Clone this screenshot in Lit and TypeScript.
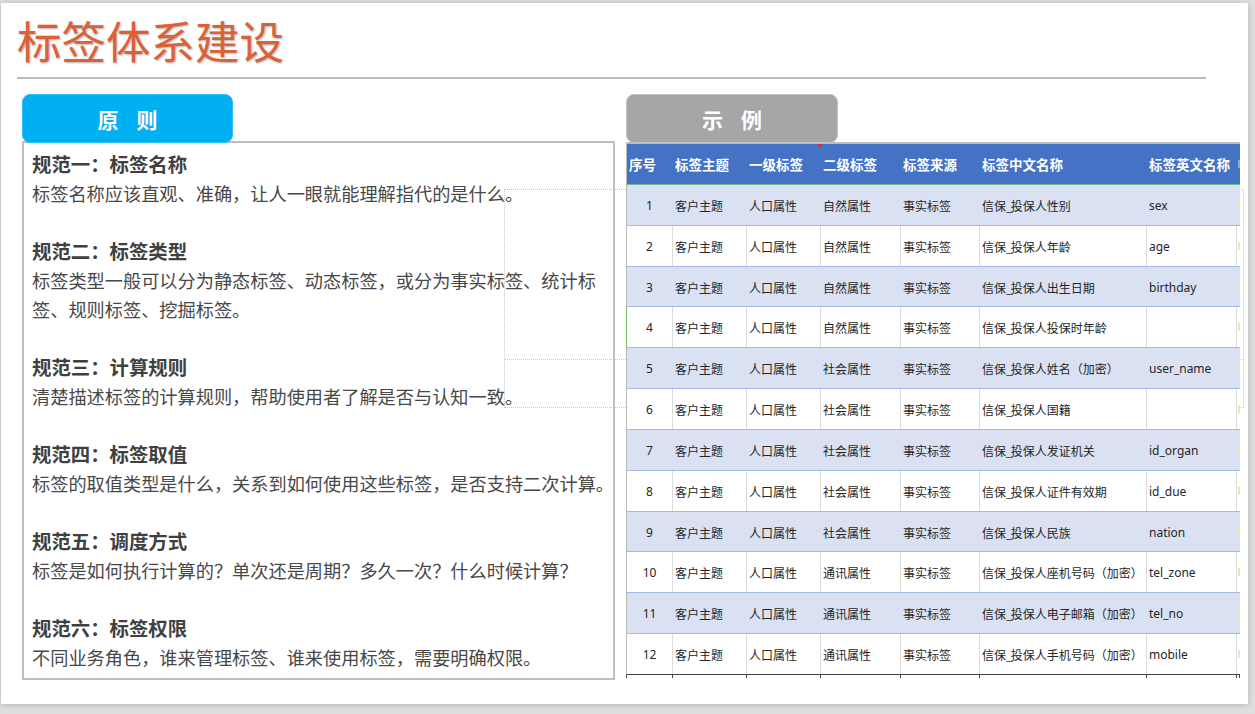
import { LitElement, css, html } from "lit";
import { customElement } from "lit/decorators.js";

const rules = [
  ["规范一：标签名称", "标签名称应该直观、准确，让人一眼就能理解指代的是什么。"],
  ["规范二：标签类型", "标签类型一般可以分为静态标签、动态标签，或分为事实标签、统计标签、规则标签、挖掘标签。"],
  ["规范三：计算规则", "清楚描述标签的计算规则，帮助使用者了解是否与认知一致。"],
  ["规范四：标签取值", "标签的取值类型是什么，关系到如何使用这些标签，是否支持二次计算。"],
  ["规范五：调度方式", "标签是如何执行计算的？单次还是周期？多久一次？什么时候计算？"],
  ["规范六：标签权限", "不同业务角色，谁来管理标签、谁来使用标签，需要明确权限。"],
];

const columns = ["序号", "标签主题", "一级标签", "二级标签", "标签来源", "标签中文名称", "标签英文名称"];

const rows = [
  ["自然属性", "性别", "sex"],
  ["自然属性", "年龄", "age"],
  ["自然属性", "出生日期", "birthday"],
  ["自然属性", "投保时年龄", ""],
  ["社会属性", "姓名（加密）", "user_name"],
  ["社会属性", "国籍", ""],
  ["社会属性", "发证机关", "id_organ"],
  ["社会属性", "证件有效期", "id_due"],
  ["社会属性", "民族", "nation"],
  ["通讯属性", "座机号码（加密）", "tel_zone"],
  ["通讯属性", "电子邮箱（加密）", "tel_no"],
  ["通讯属性", "手机号码（加密）", "mobile"],
];

@customElement("app-root")
export class AppRoot extends LitElement {
  static styles = css`
    :host {
      display: block;
      height: 714px;
      overflow: hidden;
      background: #dedede;
      font-family: "Noto Sans CJK SC", "Noto Sans", sans-serif;
    }
    .slide {
      position: relative;
      box-sizing: border-box;
      width: 1247px;
      height: 701px;
      margin: 3px 0 0 1px;
      padding: 0 0 0 16px;
      background: #fff;
      box-shadow: 0 1px 6px rgba(0, 0, 0, 0.18);
    }
    h1 {
      margin: 0;
      height: 74px;
      font-size: 44.5px;
      line-height: 74px;
      font-weight: 400;
      color: #dd6136;
      text-shadow: 1px 1px 2px rgba(0, 0, 0, 0.3);
    }
    .rule {
      width: 1189px;
      height: 2px;
      background: #bcbcbc;
    }
    .columns {
      display: flex;
      gap: 11px;
      margin: 15px 0 0 5px;
    }
    .left {
      width: 593px;
    }
    .right {
      position: relative;
      width: 614px;
    }
    .pill {
      position: relative;
      z-index: 2;
      box-sizing: border-box;
      display: flex;
      align-items: center;
      justify-content: center;
      width: 211px;
      height: 49px;
      border-radius: 8px;
      font-size: 21px;
      font-weight: 700;
      color: #fff;
      word-spacing: 13px;
    }
    .pill.blue {
      background: #00b0f0;
      border: 1px solid #2fc0f5;
    }
    .pill.grey {
      width: 212px;
      background: #a6a6a6;
      border: 1px solid #c4c4c4;
    }
    .box {
      box-sizing: border-box;
      height: 539px;
      margin-top: -2px;
      padding: 7px 0 0 8px;
      border: 2px solid #bfbfbf;
      font-size: 18.2px;
      line-height: 29px;
      color: #484848;
    }
    .item {
      margin-right: -6px;
      margin-bottom: 29px;
    }
    .item b {
      display: block;
      margin: -1px 0 1px;
      font-size: 19.4px;
      font-weight: 700;
      color: #404040;
    }
    .sheet {
      position: relative;
      z-index: 1;
      margin-top: -1px;
      background: #fff;
      border-top: 2px solid #bdbdbd;
    }
    .row {
      display: grid;
      grid-template-columns: 46px 74px 74px 80px 79px 167px 90px 3px;
      box-sizing: border-box;
      height: 40.83px;
      border-left: 1px solid #bbb;
      border-bottom: 1px solid #a3bae6;
      font-size: 12px;
      color: #262626;
    }
    .row > div {
      display: flex;
      align-items: center;
      box-sizing: border-box;
      padding: 1px 0 0 2px;
      white-space: nowrap;
      overflow: hidden;
      border-right: 1px solid #dcdcdc;
    }
    .row > .num {
      justify-content: center;
      padding-left: 0;
      font-family: "Noto Sans", sans-serif;
    }
    .row > .en {
      font-family: "Noto Sans", sans-serif;
    }
    .row > .stub {
      padding: 0;
      border-right: 0;
    }
    .stub i {
      display: block;
      width: 2px;
      height: 8px;
      margin-left: 1px;
      background: #eee2bf;
    }
    .us {
      letter-spacing: -2px;
    }
    .row.odd {
      background: #d9e1f2;
    }
    .row.odd > div {
      border-right-color: transparent;
    }
    .row.green {
      border-left-color: #70bf60;
    }
    .row.last {
      border-bottom-color: #444;
    }
    .row.head {
      height: 41px;
      background: #4472c4;
      border-bottom: 1px solid #6fb98a;
      font-size: 13.5px;
      font-weight: 700;
      color: #fff;
    }
    .row.head > div {
      border-right: 0;
      padding-top: 0;
    }
    .row.head .stub i {
      background: #8fa8dc;
    }
    .row.foot {
      height: 3px;
      border-bottom: 0;
      border-left-color: #444;
    }
    .row.foot > div {
      border-right-color: #444;
    }
    .flag {
      position: absolute;
      z-index: 2;
      top: 0;
      left: 191px;
      width: 0;
      height: 0;
      border-top: 4px solid #e8202a;
      border-left: 4px solid transparent;
    }
    .guide {
      position: absolute;
      left: 503px;
      width: 740px;
      box-sizing: border-box;
      border: 1px dotted #c8c8c8;
    }
    .guide.a {
      top: 186px;
      height: 171px;
    }
    .guide.b {
      top: 356px;
      height: 49px;
    }
  `;

  render() {
    return html`
      <div class="slide">
        <h1>标签体系建设</h1>
        <div class="rule"></div>
        <div class="guide a"></div>
        <div class="guide b"></div>
        <div class="columns">
          <div class="left">
            <div class="pill blue">原 则</div>
            <div class="box">
              ${rules.map(
                ([title, text]) => html`<div class="item"><b>${title}</b>${text}</div>`
              )}
            </div>
          </div>
          <div class="right">
            <div class="pill grey">示 例</div>
            <div class="sheet">
              <div class="flag"></div>
              <div class="row head">
                ${columns.map((c) => html`<div>${c}</div>`)}
                <div class="stub"><i></i></div>
              </div>
              ${rows.map(
                (r, i) => html`
                  <div class="row ${i % 2 == 0 ? "odd" : ""} ${i == 3 ? "green" : ""} ${i == 11 ? "last" : ""}">
                    <div class="num">${i + 1}</div>
                    <div>客户主题</div>
                    <div>人口属性</div>
                    <div>${r[0]}</div>
                    <div>事实标签</div>
                    <div><span>信保<span class="us">_</span>投保人${r[1]}</span></div>
                    <div class="en">${r[2]}</div>
                    <div class="stub"><i></i></div>
                  </div>
                `
              )}
              <div class="row foot">
                <div></div><div></div><div></div><div></div><div></div><div></div><div></div><div></div>
              </div>
            </div>
          </div>
        </div>
      </div>
    `;
  }
}
